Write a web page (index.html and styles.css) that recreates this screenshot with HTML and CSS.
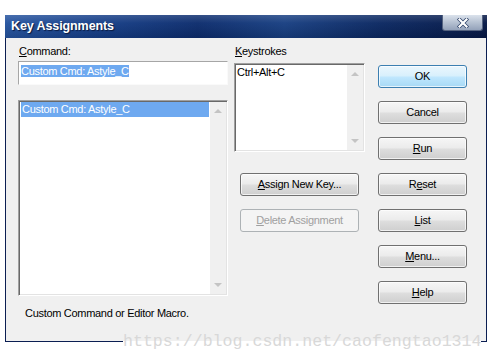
FILE: index.html
```html
<!DOCTYPE html>
<html lang="en">
<head>
<meta charset="UTF-8">
<title>Key Assignments</title>
<link rel="stylesheet" href="styles.css">
</head>
<body>

<div class="screen">
<div class="window">
    <div class="titlebar">
        <span class="title">Key Assignments</span>
        <span class="close">
            <svg width="12" height="10" viewBox="0 0 12 10">
                <path d="M2.5 1.5 L9.5 8.5 M9.5 1.5 L2.5 8.5" stroke="#2b3f66" stroke-width="3.6" stroke-linecap="square"/>
                <path d="M2.5 1.5 L9.5 8.5 M9.5 1.5 L2.5 8.5" stroke="#fff" stroke-width="2.2" stroke-linecap="square"/>
            </svg>
        </span>
    </div>

    <div class="client">
        <div class="col-left">
            <div class="label"><u>C</u>ommand:</div>
            <div class="field"><span class="sel">Custom Cmd: Astyle_C</span></div>
            <div class="listbox">
                <div class="list-items">
                    <div class="item sel">Custom Cmd: Astyle_C</div>
                </div>
                <div class="vscroll"><span class="arrow up"></span><span class="arrow down"></span></div>
            </div>
            <div class="status">Custom Command or Editor Macro.</div>
        </div>

        <div class="col-mid">
            <div class="label"><u>K</u>eystrokes</div>
            <div class="keys">
                <div class="list-items">
                    <div class="item">Ctrl+Alt+C</div>
                </div>
                <div class="vscroll"><span class="arrow up"></span><span class="arrow down"></span></div>
            </div>
            <button class="btn wide first"><u>A</u>ssign New Key...</button>
            <button class="btn wide disabled"><u>D</u>elete Assignment</button>
        </div>

        <div class="col-right">
            <button class="btn default">OK</button>
            <button class="btn">Cancel</button>
            <button class="btn"><u>R</u>un</button>
            <button class="btn">R<u>e</u>set</button>
            <button class="btn"><u>L</u>ist</button>
            <button class="btn"><u>M</u>enu...</button>
            <button class="btn"><u>H</u>elp</button>
        </div>
    </div>
</div>
<div class="watermark">https://blog.csdn.net/caofengtao1314</div>
</div>

</body>
</html>
```

FILE: styles.css
```css
body {
    margin: 0;
    background: #fff;
    font-family: "Liberation Sans", Arial, sans-serif;
    font-size: 11px;
    letter-spacing: -0.3px;
    color: #000;
}
.screen {
    position: relative;
    width: 496px;
    height: 360px;
    padding: 15px 0 0 5px;
    box-sizing: border-box;
    overflow: hidden;
}
.window {
    width: 482px;
}
.titlebar {
    height: 23px;
    display: flex;
    justify-content: space-between;
    align-items: flex-start;
    background:
        linear-gradient(180deg, rgba(255,255,255,0.16) 0%, rgba(255,255,255,0.03) 35%, rgba(0,0,0,0.12) 100%),
        linear-gradient(90deg, #26549f 0%, #17408a 18%, #0d2d6e 40%, #183f82 58%, #0b2862 78%, #061846 100%);
}
.title {
    color: #fff;
    font-weight: bold;
    font-size: 12.5px;
    letter-spacing: -0.1px;
    line-height: 23px;
    padding-left: 6px;
    text-shadow: 1px 1px 1px #0a1a40;
}
.close {
    width: 41px;
    height: 16px;
    margin-right: 4px;
    box-sizing: border-box;
    border: 1px solid #54627f;
    border-top: none;
    border-radius: 0 0 3px 3px;
    background: linear-gradient(180deg, #dbe2ec 0%, #b9c4d4 45%, #94a2ba 100%);
    display: flex;
    align-items: center;
    justify-content: center;
}
.client {
    display: flex;
    background: #f0f0f0;
    border: 1px solid #0b1e52;
    border-top: none;
    padding: 6px 19px 21px 12px;
}
.col-left {
    width: 210px;
    display: flex;
    flex-direction: column;
}
.col-mid {
    width: 131px;
    margin-left: 6px;
    display: flex;
    flex-direction: column;
}
.col-right {
    width: 89px;
    margin-left: 13px;
    padding-top: 21px;
    display: flex;
    flex-direction: column;
    gap: 13px;
}
.label {
    line-height: 14px;
    height: 14px;
    padding-left: 1px;
}
.field {
    margin-top: 3px;
    height: 24px;
    box-sizing: border-box;
    background: #fff;
    border-top: 1px solid #a6a6a6;
    border-left: 1px solid #a6a6a6;
    border-right: 1px solid #fafafa;
    border-bottom: 1px solid #fafafa;
    padding: 2px 0 0 2px;
    line-height: 14px;
}
.sel {
    background: #6ea9f0;
    color: #fff;
}
.listbox, .keys {
    display: flex;
    background: #fff;
    box-sizing: border-box;
    border-top: 1px solid #a0a0a0;
    border-left: 1px solid #a0a0a0;
    border-right: 1px solid #fff;
    border-bottom: 1px solid #fff;
    box-shadow: inset 1px 1px 0 #696969, inset -1px -1px 0 #e3e3e3;
}
.listbox {
    margin-top: 15px;
    height: 196px;
}
.keys {
    margin-top: 5px;
    height: 89px;
}
.list-items {
    flex: 1;
    padding: 1px 1px 0 2px;
}
.item {
    line-height: 15px;
    padding-left: 1px;
}
.keys .item {
    line-height: 14px;
    padding-left: 0;
}
.vscroll {
    width: 16px;
    margin: 1px 1px 1px 0;
    background: #f0f0f0;
    display: flex;
    flex-direction: column;
    justify-content: space-between;
    align-items: center;
    padding: 7px 0;
}
.arrow {
    width: 0;
    height: 0;
    border-left: 4px solid transparent;
    border-right: 4px solid transparent;
}
.arrow.up {
    border-bottom: 4px solid #c4c4c4;
}
.arrow.down {
    border-top: 4px solid #c4c4c4;
}
.status {
    margin-top: 10px;
    line-height: 14px;
    padding-left: 7px;
}
.btn {
    height: 23px;
    width: 89px;
    box-sizing: border-box;
    border: 1px solid #707070;
    border-radius: 3px;
    background: linear-gradient(180deg, #f6f6f6 0%, #ececec 45%, #dddddd 55%, #cfcfcf 100%);
    box-shadow: inset 0 0 0 1px rgba(255,255,255,0.7);
    font-family: inherit;
    font-size: 11px;
    letter-spacing: -0.3px;
    color: #000;
    padding: 0;
    line-height: 21px;
    text-align: center;
}
.btn.default {
    border-color: #3c7fb1;
    background: linear-gradient(180deg, #eaf6fd 0%, #d9f0fc 45%, #bee6fd 55%, #a7d9f5 100%);
}
.btn.wide {
    width: 119px;
    margin-left: 6px;
}
.btn.first {
    margin-top: 21px;
}
.btn.disabled {
    margin-top: 13px;
    border-color: #adb2b5;
    background: #f4f4f4;
    color: #a0a0a0;
    box-shadow: none;
}
.watermark {
    position: absolute;
    left: 123px;
    top: 332px;
    font-family: "Liberation Mono", "Courier New", monospace;
    font-size: 16.6px;
    letter-spacing: 0;
    line-height: 20px;
    color: #d8d8d8;
    background: linear-gradient(180deg, transparent 9px, #fff 9px);
    white-space: nowrap;
}
```
